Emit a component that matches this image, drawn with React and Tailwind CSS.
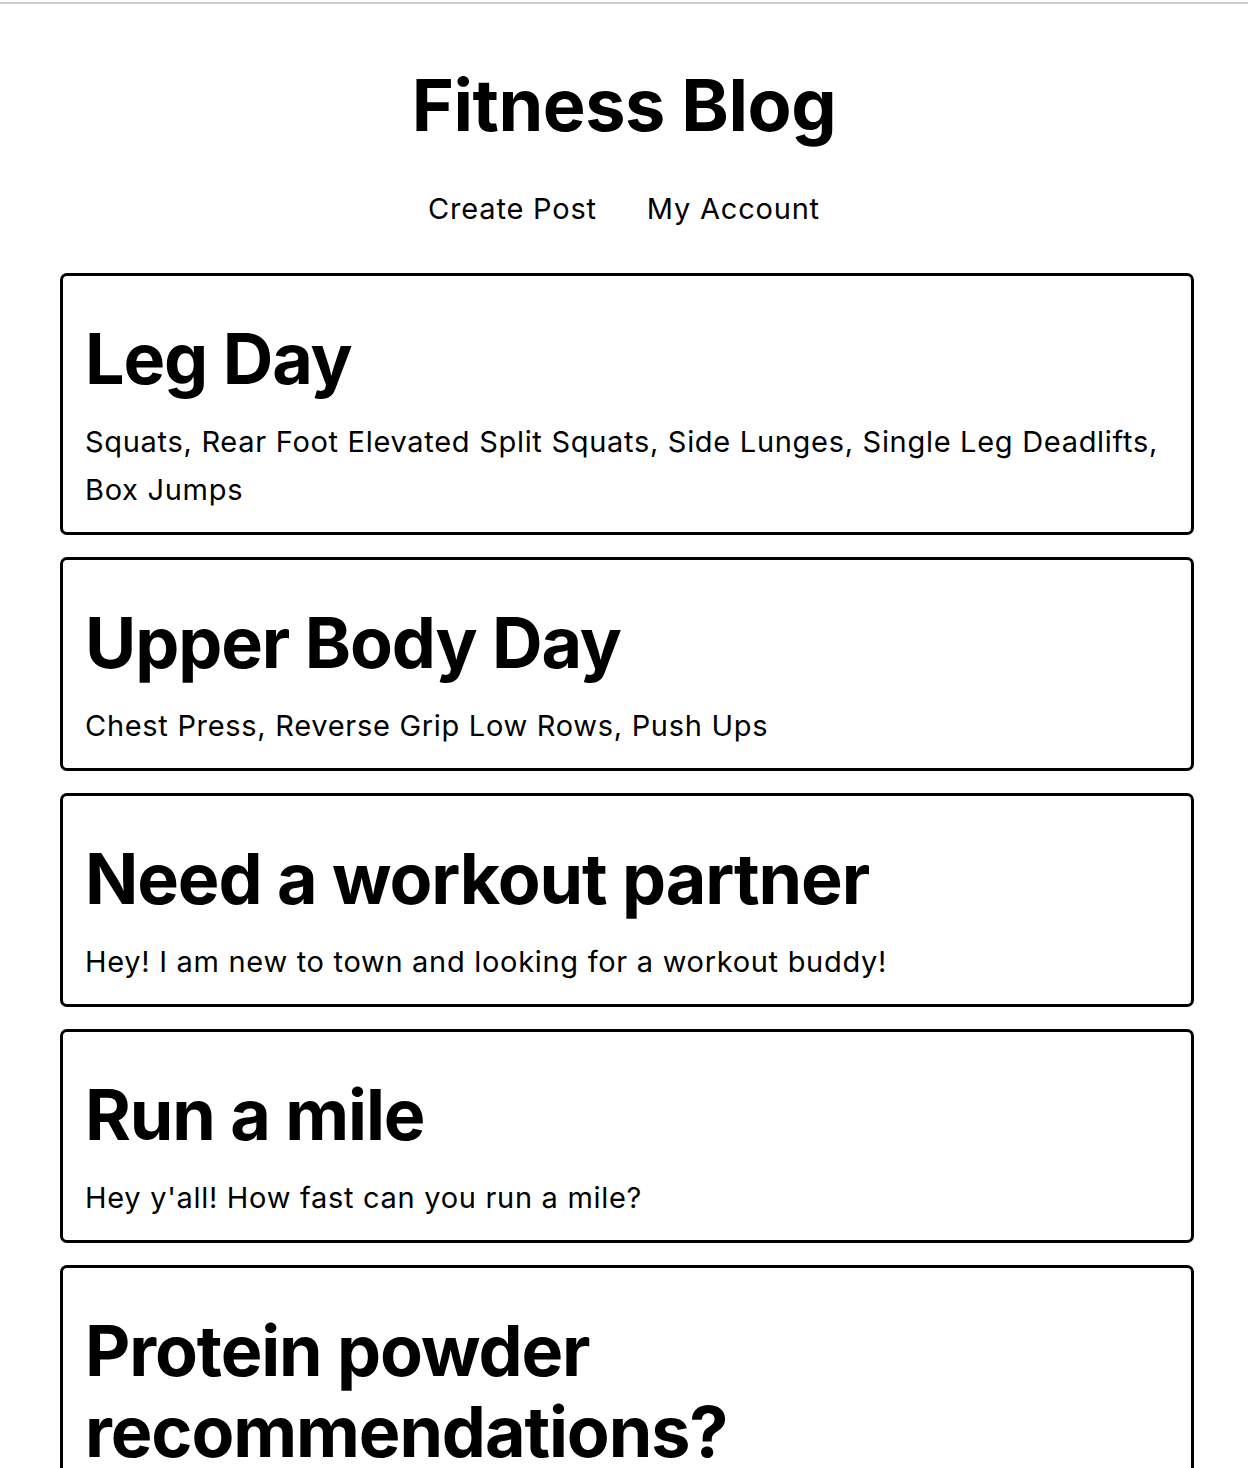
import React from "react";

const posts = [
  {
    title: "Leg Day",
    body: "Squats, Rear Foot Elevated Split Squats, Side Lunges, Single Leg Deadlifts, Box Jumps",
  },
  {
    title: "Upper Body Day",
    body: "Chest Press, Reverse Grip Low Rows, Push Ups",
  },
  {
    title: "Need a workout partner",
    body: "Hey! I am new to town and looking for a workout buddy!",
  },
  {
    title: "Run a mile",
    body: "Hey y'all! How fast can you run a mile?",
  },
  {
    title: "Protein powder recommendations?",
    body: "Looking for a good tasting protein powder. Any suggestions?",
  },
];

function PostCard({ title, body }) {
  return (
    <div className="border-[3px] border-black rounded-[7px] px-[22px] pt-[42px] pb-[18px]">
      <h2 className="text-[70px] leading-[81px] font-bold tracking-[-1.1px] mb-[19px]">
        {title}
      </h2>
      <p className="text-[29px] leading-[48px] tracking-[0.7px]">{body}</p>
    </div>
  );
}

export default function App() {
  return (
    <div
      className="min-h-screen bg-white text-black"
      style={{ fontFamily: "Inter, 'Noto Sans', sans-serif" }}
    >
      <div className="h-[2px] mt-[2px] bg-[#cccccc]" />
      <header className="flex flex-col items-center pt-[65px]">
        <h1 className="text-[72px] leading-[72px] font-bold tracking-[-0.5px]">
          Fitness Blog
        </h1>
        <nav className="flex gap-[50px] mt-[44px] text-[29px] leading-[48px] tracking-[0.8px]">
          <a href="#">Create Post</a>
          <a href="#">My Account</a>
        </nav>
      </header>
      <main className="flex flex-col gap-[22px] pl-[60px] pr-[54px] mt-[40px] pb-10">
        {posts.map((post) => (
          <PostCard key={post.title} title={post.title} body={post.body} />
        ))}
      </main>
    </div>
  );
}
